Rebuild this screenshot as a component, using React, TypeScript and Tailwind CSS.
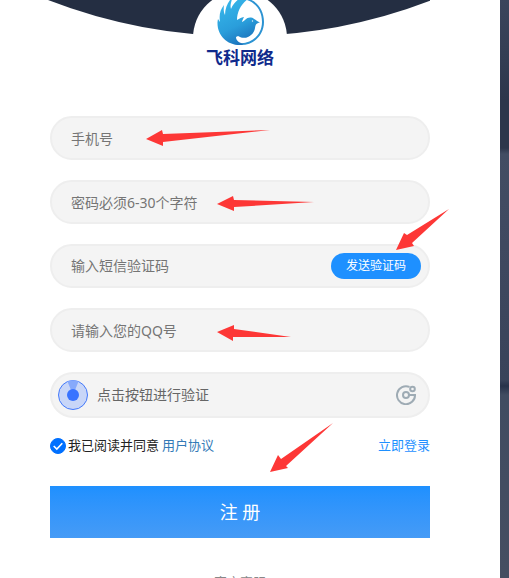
import type { ReactNode } from "react";

const fieldClass =
  "block h-11 w-full rounded-full border-2 border-[#eeeeee] bg-[#f4f4f4] px-[19px] text-sm text-[#333333] outline-none placeholder:text-[#757575]";

const arrows = [
  "146,139 162,130 163,134 270,130 163,142 163,146",
  "217,204 233,196 234,200 314,202 234,207 234,211",
  "396,250 404,233 407,235 449,209 412,243 414,246",
  "217,332 234,325 234,329 291,337 233,337 233,341",
  "270,472 278,455 281,459 333,423 286,466 288,468",
];

function Field({ id, label, type = "text" }: { id: string; label: string; type?: string }) {
  return <input id={id} type={type} aria-label={label} placeholder={label} className={fieldClass} />;
}

function BirdLogo() {
  return (
    <svg viewBox="8 -1 48 47" className="h-[47px] w-12 shrink-0" aria-hidden="true">
      <defs>
        <linearGradient id="bird" x1="0.2" y1="0.1" x2="0.6" y2="1">
          <stop offset="0" stopColor="#35b3e8" />
          <stop offset="0.55" stopColor="#2a9edb" />
          <stop offset="1" stopColor="#1a70ba" />
        </linearGradient>
      </defs>
      <path
        d="M41 -1 C50 2 56 11 56 22 C56 35 46 45 33 45 L33 43.500 C45 43 54 34 54 22 C54 11 48 3 39 0Z"
        fill="#2c93d2"
      />
      <path
        d="M40 -1 C33 4 29 12 29 20 C32 18 35 17 36 17 C35 19 34 21 34 22 C37 21 38 17 43 17.500 C46 18 47 20 52 22.500 C48 23 47.500 25 47 28 C46 35 38 41 30 36 L28 37 C28 41 32 43.500 36 43.500 L34 45 C19 46 9 35 9.500 22 C9.800 20 10 19 10 19 L12 22 C11 15 12 10 16 5 C15.500 9 15.500 12 17 15 C17 9 19 4 22 0 L24 -1 C23 3 22 6 23 9 C25 4 28 1 31 -1Z"
        fill="url(#bird)"
      />
      <circle cx="44.500" cy="21" r="0.7" fill="#e8f6fc" />
    </svg>
  );
}

function Header() {
  return (
    <header className="relative -ml-0.5 flex h-[116px] justify-center overflow-hidden pl-0.5">
      <svg
        viewBox="0 0 384 36"
        className="absolute top-0 left-0 h-9 w-[384px]"
        aria-hidden="true"
      >
        <path d="M0 0 H384 A530 530 0 0 1 0 0Z" fill="#242e42" />
      </svg>
      <div className="relative -mt-[9px] flex size-[94px] flex-col items-center rounded-full bg-white pt-2">
        <BirdLogo />
        <span className="text-[17px] leading-6 font-bold whitespace-nowrap text-[#102a8c]">
          飞科网络
        </span>
      </div>
    </header>
  );
}

function Captcha({ children }: { children: ReactNode }) {
  return (
    <button
      type="button"
      className="flex h-[46px] w-full items-center rounded-full border-2 border-[#eeeeee] bg-[#f4f4f4] pr-3 pl-1.5 text-sm text-[#666666]"
    >
      <svg viewBox="0 0 30 30" className="mr-[9px] size-[30px]" aria-hidden="true">
        <circle cx="15" cy="15" r="14.500" fill="#c8d6f8" stroke="#4379fb" />
        <path d="M15 15 L9.500 1.500 A14 14 0 0 1 20.500 1.500Z" fill="#86a9fb" />
        <circle cx="15" cy="15" r="6" fill="#3873ff" />
      </svg>
      <span>{children}</span>
      <svg
        viewBox="0 0 20 20"
        className="ml-auto size-5"
        fill="none"
        stroke="#9eabb4"
        strokeWidth="2"
        aria-hidden="true"
      >
        <path d="M13.500 1.900 A9 9 0 1 0 19 10 H13" />
        <circle cx="10" cy="10" r="3" />
        <circle cx="16.500" cy="4" r="2.300" />
      </svg>
    </button>
  );
}

export default function App() {
  return (
    <div className="relative flex h-screen overflow-hidden bg-white font-['Noto_Sans','Noto_Sans_CJK_SC',sans-serif]">
      <main className="min-w-0 flex-1 pr-[70px] pl-[50px]">
        <Header />
        <form className="flex flex-col" onSubmit={(e) => e.preventDefault()}>
          <div className="flex flex-col gap-5">
            <Field id="phone" label="手机号" type="tel" />
            <Field id="password" label="密码必须6-30个字符" type="password" />
            <div className="flex h-11 items-center rounded-full border-2 border-[#eeeeee] bg-[#f4f4f4] pr-[7px] pl-[19px]">
              <input
                id="code"
                aria-label="输入短信验证码"
                placeholder="输入短信验证码"
                className="min-w-0 flex-1 bg-transparent text-sm outline-none placeholder:text-[#757575]"
              />
              <button
                type="button"
                className="h-[26px] w-[90px] rounded-full bg-[#1e90ff] text-xs text-white"
              >
                发送验证码
              </button>
            </div>
            <Field id="qq" label="请输入您的QQ号" />
            <Captcha>点击按钮进行验证</Captcha>
          </div>
          <div className="mt-4 flex h-6 items-center text-[13px] text-[#222222]">
            <label className="flex items-center gap-0.5">
              <span className="grid size-4 place-items-center">
                <input
                  type="checkbox"
                  defaultChecked
                  className="peer col-start-1 row-start-1 size-4 appearance-none rounded-full border border-[#aaaaaa] checked:border-[#0070ff] checked:bg-[#0070ff]"
                />
                <svg
                  viewBox="0 0 16 16"
                  className="pointer-events-none col-start-1 row-start-1 hidden size-4 peer-checked:block"
                  fill="none"
                  stroke="white"
                  strokeWidth="1.600"
                  aria-hidden="true"
                >
                  <path d="M3.700 8 L6.800 11 L12.300 5.300" />
                </svg>
              </span>
              我已阅读并同意
            </label>
            <a href="#agreement" className="ml-[3px] text-[#337ab7]">
              用户协议
            </a>
            <a href="#login" className="ml-auto text-[#1e90ff]">
              立即登录
            </a>
          </div>
          <button
            type="submit"
            className="mt-7 h-[52px] w-full bg-linear-to-b from-[#1e90ff] to-[#459bf6] text-lg text-white"
          >
            注 册
          </button>
        </form>
        <footer className="mt-[34px] text-center text-[13px] leading-5 text-[#888888]">官方客服</footer>
      </main>
      <aside className="w-[9px] shrink-0 bg-[linear-gradient(#3b455c_0,#333d53_60px,#2d364b_100px,#2d364b_148px,#434d63_154px,#414b62_200px,#39435a_380px,#28324a_386px,#414c61_395px,#454e61_100%)]" />
      <svg
        viewBox="0 0 509 578"
        className="pointer-events-none absolute top-0 left-0 h-[578px] w-[509px]"
        fill="#fd3736"
        aria-hidden="true"
      >
        {arrows.map((points) => (
          <polygon key={points} points={points} />
        ))}
      </svg>
    </div>
  );
}
